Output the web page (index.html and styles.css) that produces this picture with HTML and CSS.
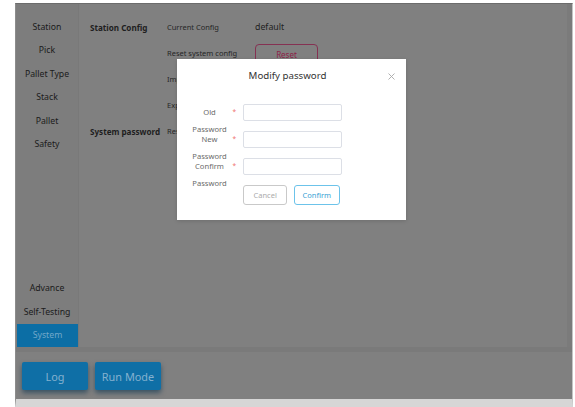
FILE: index.html
```html
<!DOCTYPE html>
<html>
<head>
<meta charset="utf-8">
<link rel="stylesheet" href="styles.css">
</head>
<body>
<div class="frame">
  <div class="main">
    <nav class="sidebar">
      <div class="nav-group">
        <div class="nav-item">Station</div>
        <div class="nav-item">Pick</div>
        <div class="nav-item">Pallet Type</div>
        <div class="nav-item">Stack</div>
        <div class="nav-item">Pallet</div>
        <div class="nav-item">Safety</div>
      </div>
      <div class="nav-group">
        <div class="nav-item">Advance</div>
        <div class="nav-item">Self-Testing</div>
        <div class="nav-item active">System</div>
      </div>
    </nav>
    <section class="content">
      <div class="sec-title">Station Config</div>
      <div class="cell-label">Current Config</div>
      <div class="cell-value">default</div>

      <div></div>
      <div class="cell-label">Reset system config</div>
      <div><button class="btn-danger">Reset</button></div>

      <div></div>
      <div class="cell-label">Import config</div>
      <div></div>

      <div></div>
      <div class="cell-label">Export config</div>
      <div></div>

      <div class="sec-title">System password</div>
      <div class="cell-label">Reset password</div>
      <div></div>
    </section>
  </div>
  <div class="bottombar">
    <button class="btn-blue">Log</button>
    <button class="btn-blue">Run Mode</button>
  </div>

  <div class="modal">
    <div class="modal-header">
      <div class="modal-title">Modify password</div>
      <svg class="modal-close" width="7" height="7" viewBox="0 0 7 7"><path d="M0.5 0.5 L6.5 6.5 M6.5 0.5 L0.5 6.5" stroke="#a8a8a8" stroke-width="0.9" fill="none"/></svg>
    </div>
    <div class="form">
      <div class="form-row">
        <div class="form-label">Old Password</div>
        <span class="req">*</span>
        <div class="input"></div>
      </div>
      <div class="form-row">
        <div class="form-label">New Password</div>
        <span class="req">*</span>
        <div class="input"></div>
      </div>
      <div class="form-row">
        <div class="form-label">Confirm Password</div>
        <span class="req">*</span>
        <div class="input"></div>
      </div>
      <div class="form-actions">
        <button class="btn-cancel">Cancel</button>
        <button class="btn-confirm">Confirm</button>
      </div>
    </div>
  </div>
</div>
</body>
</html>
```

FILE: styles.css
```css
* { box-sizing: border-box; }
html, body { margin: 0; padding: 0; }
body {
  width: 575px;
  height: 407px;
  background: #ffffff;
  font-family: "Noto Sans", "Open Sans", sans-serif;
  overflow: hidden;
}
.frame {
  position: relative;
  margin: 3px 0 0 15px;
  width: 558px;
  height: 404px;
  border-top: 1px solid #6c6c6c;
  border-left: 1px solid #8c8c8c;
  border-right: 1px solid #c4c4c4;
  border-bottom: 8px solid #d6d6d6;
  background: #808080;
  display: flex;
  flex-direction: column;
}
.main {
  display: flex;
  height: 343px;
}
.sidebar {
  width: 63px;
  flex: none;
  background: #7d7d7d;
  border-right: 1px solid #797979;
  display: flex;
  flex-direction: column;
  justify-content: space-between;
  padding: 11px 0 0 0;
}
.nav-item {
  height: 23.5px;
  display: flex;
  align-items: center;
  justify-content: center;
  font-size: 8.7px;
  color: #1b1b1b;
  white-space: nowrap;
}
.nav-item.active {
  background: #0c6ea5;
  color: #72a8c9;
  margin-left: 1px;
}
.content {
  flex: 1;
  display: grid;
  grid-template-columns: 77px 88px 1fr;
  grid-auto-rows: 26px;
  align-items: center;
  align-content: start;
  padding: 10px 0 0 11px;
  border-right: 5px solid #7b7b7b;
}
.sec-title {
  font-size: 8.1px;
  font-weight: 700;
  color: #1e1e1e;
  white-space: nowrap;
}
.cell-label {
  font-size: 7.5px;
  color: #262626;
  white-space: nowrap;
}
.cell-value {
  font-size: 8.8px;
  color: #222;
}
.btn-danger {
  width: 63px;
  height: 21px;
  border: 1px solid #853152;
  border-radius: 4px;
  background: transparent;
  color: #8c2247;
  font-family: inherit;
  font-size: 8px;
  padding: 0;
}
.bottombar {
  height: 52px;
  border-top: 5px solid #7a7a7a;
  display: flex;
  gap: 7px;
  padding: 10px 0 0 6px;
}
.btn-blue {
  width: 66px;
  height: 28px;
  border: none;
  border-radius: 2px;
  background: #0f6fa6;
  color: #84b1cf;
  font-family: inherit;
  font-size: 10.9px;
  padding: 0;
  box-shadow: 0 3px 5px rgba(0, 45, 75, 0.55);
}
.modal {
  position: absolute;
  left: 161px;
  top: 55px;
  width: 229px;
  height: 161px;
  background: #ffffff;
  box-shadow: 0 1px 4px rgba(0, 0, 0, 0.15);
}
.modal-header {
  position: relative;
  padding-top: 10px;
  height: 24px;
}
.modal-title {
  text-align: center;
  font-size: 9.7px;
  line-height: 14px;
  color: #333;
  padding-right: 8px;
}
.modal-close {
  position: absolute;
  right: 11px;
  top: 13.5px;
}
.form {
  margin-top: 21px;
  padding-left: 13px;
}
.form-row {
  display: flex;
  height: 16.5px;
  margin-bottom: 10.5px;
}
.form-row:nth-child(3) { margin-bottom: 10px; }
.form-label {
  width: 39px;
  height: 16.5px;
  text-align: center;
  font-size: 7.6px;
  line-height: 16.6px;
  color: #6a6a6a;
  overflow: visible;
}
.req {
  width: 14px;
  padding-left: 3.5px;
  color: #f07070;
  font-size: 6.5px;
  line-height: 15.5px;
}
.input {
  width: 98.5px;
  height: 16.5px;
  border: 1px solid #dcdfe6;
  border-radius: 2px;
}
.form-actions {
  display: flex;
  gap: 6.6px;
  padding-left: 53px;
}
.btn-cancel, .btn-confirm {
  height: 20.7px;
  border-radius: 3px;
  background: #fff;
  font-family: inherit;
  font-size: 7.5px;
  padding: 0;
}
.btn-cancel {
  width: 44.4px;
  border: 1px solid #c9c9c9;
  color: #ababab;
}
.btn-confirm {
  width: 45.7px;
  border: 1px solid #6cc3ea;
  color: #3aa2d4;
}
```
